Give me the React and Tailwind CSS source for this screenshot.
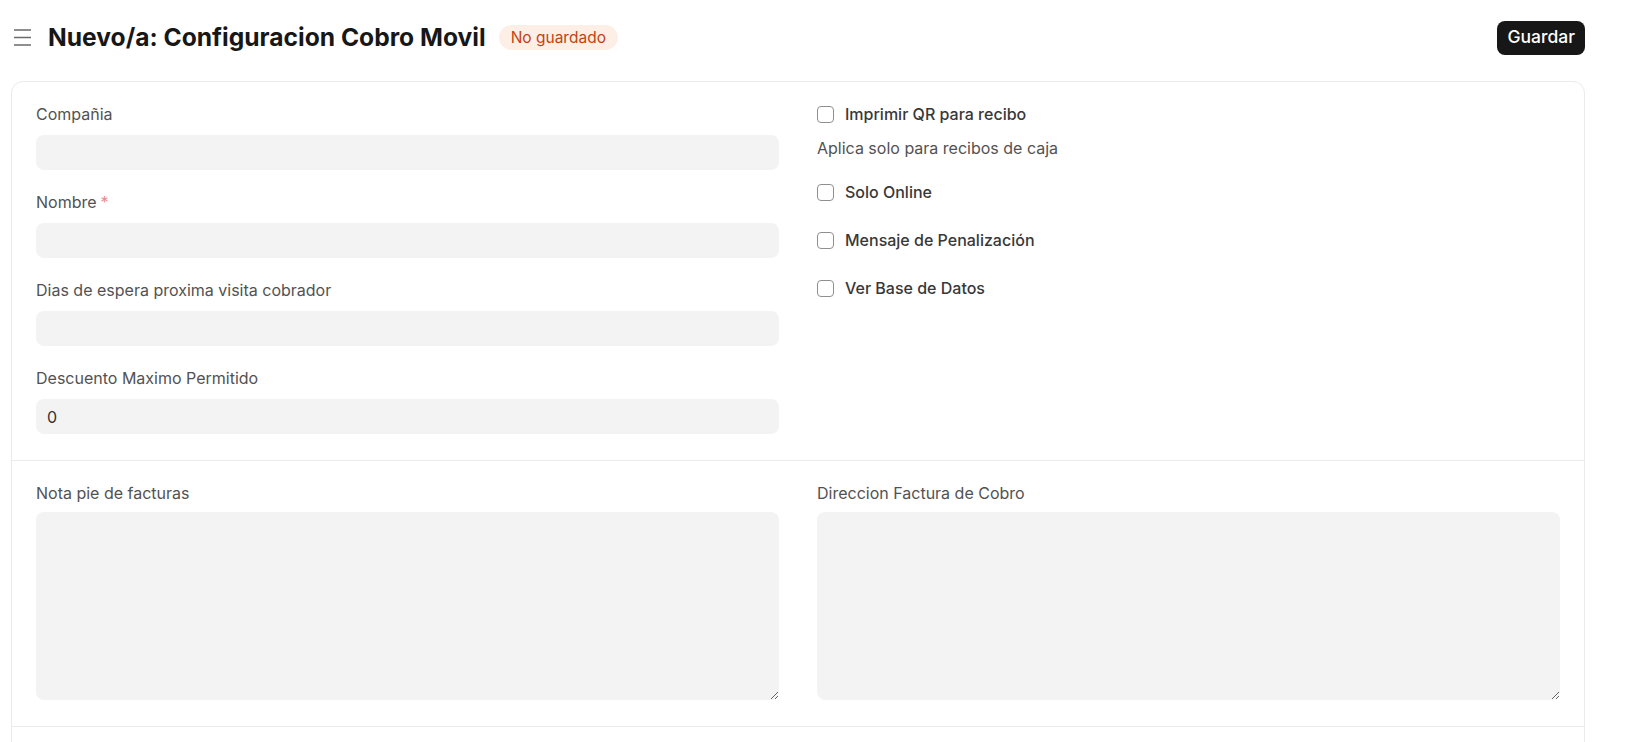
import { useState } from "react";

const leftFields = [
  { label: "Compañia", value: "" },
  { label: "Nombre", value: "", required: true },
  { label: "Dias de espera proxima visita cobrador", value: "" },
  { label: "Descuento Maximo Permitido", value: "0" },
];

const checks = [
  { label: "Imprimir QR para recibo", description: "Aplica solo para recibos de caja" },
  { label: "Solo Online" },
  { label: "Mensaje de Penalización" },
  { label: "Ver Base de Datos" },
];

export default function App() {
  return (
    <main className="min-h-screen bg-white pl-[11px] pr-[45px] font-['Inter','Noto_Sans',sans-serif] text-[#171717]">
      <PageHeader />
      <section className="mt-[6px] rounded-xl border border-[#ebebeb] bg-white">
        <div className="grid grid-cols-2 gap-x-[38px] px-6 pb-[26px] pt-5">
          <div className="flex flex-col gap-5">
            {leftFields.map((field) => (
              <TextField key={field.label} {...field} />
            ))}
          </div>
          <div className="flex flex-col">
            {checks.map((check, index) => (
              <CheckField
                key={check.label}
                {...check}
                spacing={index === 0 ? "" : checks[index - 1].description ? "mt-5" : "mt-6"}
              />
            ))}
          </div>
        </div>

        <div className="grid grid-cols-2 gap-x-[38px] border-t border-[#ebebeb] px-6 pb-[26px] pt-5">
          <AreaField label="Nota pie de facturas" />
          <AreaField label="Direccion Factura de Cobro" />
        </div>

        <div className="h-[120px] border-t border-[#ebebeb]" />
      </section>
    </main>
  );
}

function PageHeader() {
  return (
    <header className="flex h-[75px] items-center">
      <button type="button" className="ml-[3px] grid h-[17px] w-[17px] place-items-center text-[#6b6b6b]" aria-label="Menu">
        <svg width="17" height="17" viewBox="0 0 17 17" fill="none" stroke="currentColor" strokeWidth="1.5">
          <path d="M0 1h17M0 8.5h17M0 16h17" />
        </svg>
      </button>
      <h1 className="ml-[17px] text-[24.6px] font-bold leading-none text-[#171717]">Nuevo/a: Configuracion Cobro Movil</h1>
      <span className="ml-[13px] rounded-full bg-[#fdefe6] px-3 py-[2px] text-[15.5px] leading-[21px] text-[#c4420f]">No guardado</span>
      <button type="button" className="ml-auto h-[34px] rounded-lg bg-[#171717] px-[10px] text-[17.5px] font-medium text-white">
        Guardar
      </button>
    </header>
  );
}

function TextField({ label, value, required }) {
  const [text, setText] = useState(value);
  return (
    <label className="flex flex-col">
      <span className="text-base leading-6 text-[#525252]">
        {label}
        {required ? <span className="ml-1 text-[#e98b8b]">*</span> : null}
      </span>
      <input
        className="mt-[9px] h-[35px] w-full rounded-lg bg-[#f3f3f3] px-[11px] text-base text-[#333] outline-none"
        value={text}
        onChange={(event) => setText(event.target.value)}
      />
    </label>
  );
}

function CheckField({ label, description, spacing }) {
  return (
    <div className={spacing}>
      <label className="flex h-6 items-center gap-[11px]">
        <span className="h-[17px] w-[17px] shrink-0 rounded-[4px] border border-[#8f8f8f] bg-white" />
        <span className="text-base font-medium leading-6 text-[#383838]">{label}</span>
      </label>
      {description ? <p className="mt-[10px] text-base leading-6 text-[#525252]">{description}</p> : null}
    </div>
  );
}

function AreaField({ label }) {
  return (
    <label className="flex flex-col">
      <span className="text-base leading-6 text-[#525252]">{label}</span>
      <textarea className="mt-[7px] h-[188px] w-full resize-y rounded-lg bg-[#f3f3f3] px-[11px] py-2 text-base text-[#333] outline-none" />
    </label>
  );
}
